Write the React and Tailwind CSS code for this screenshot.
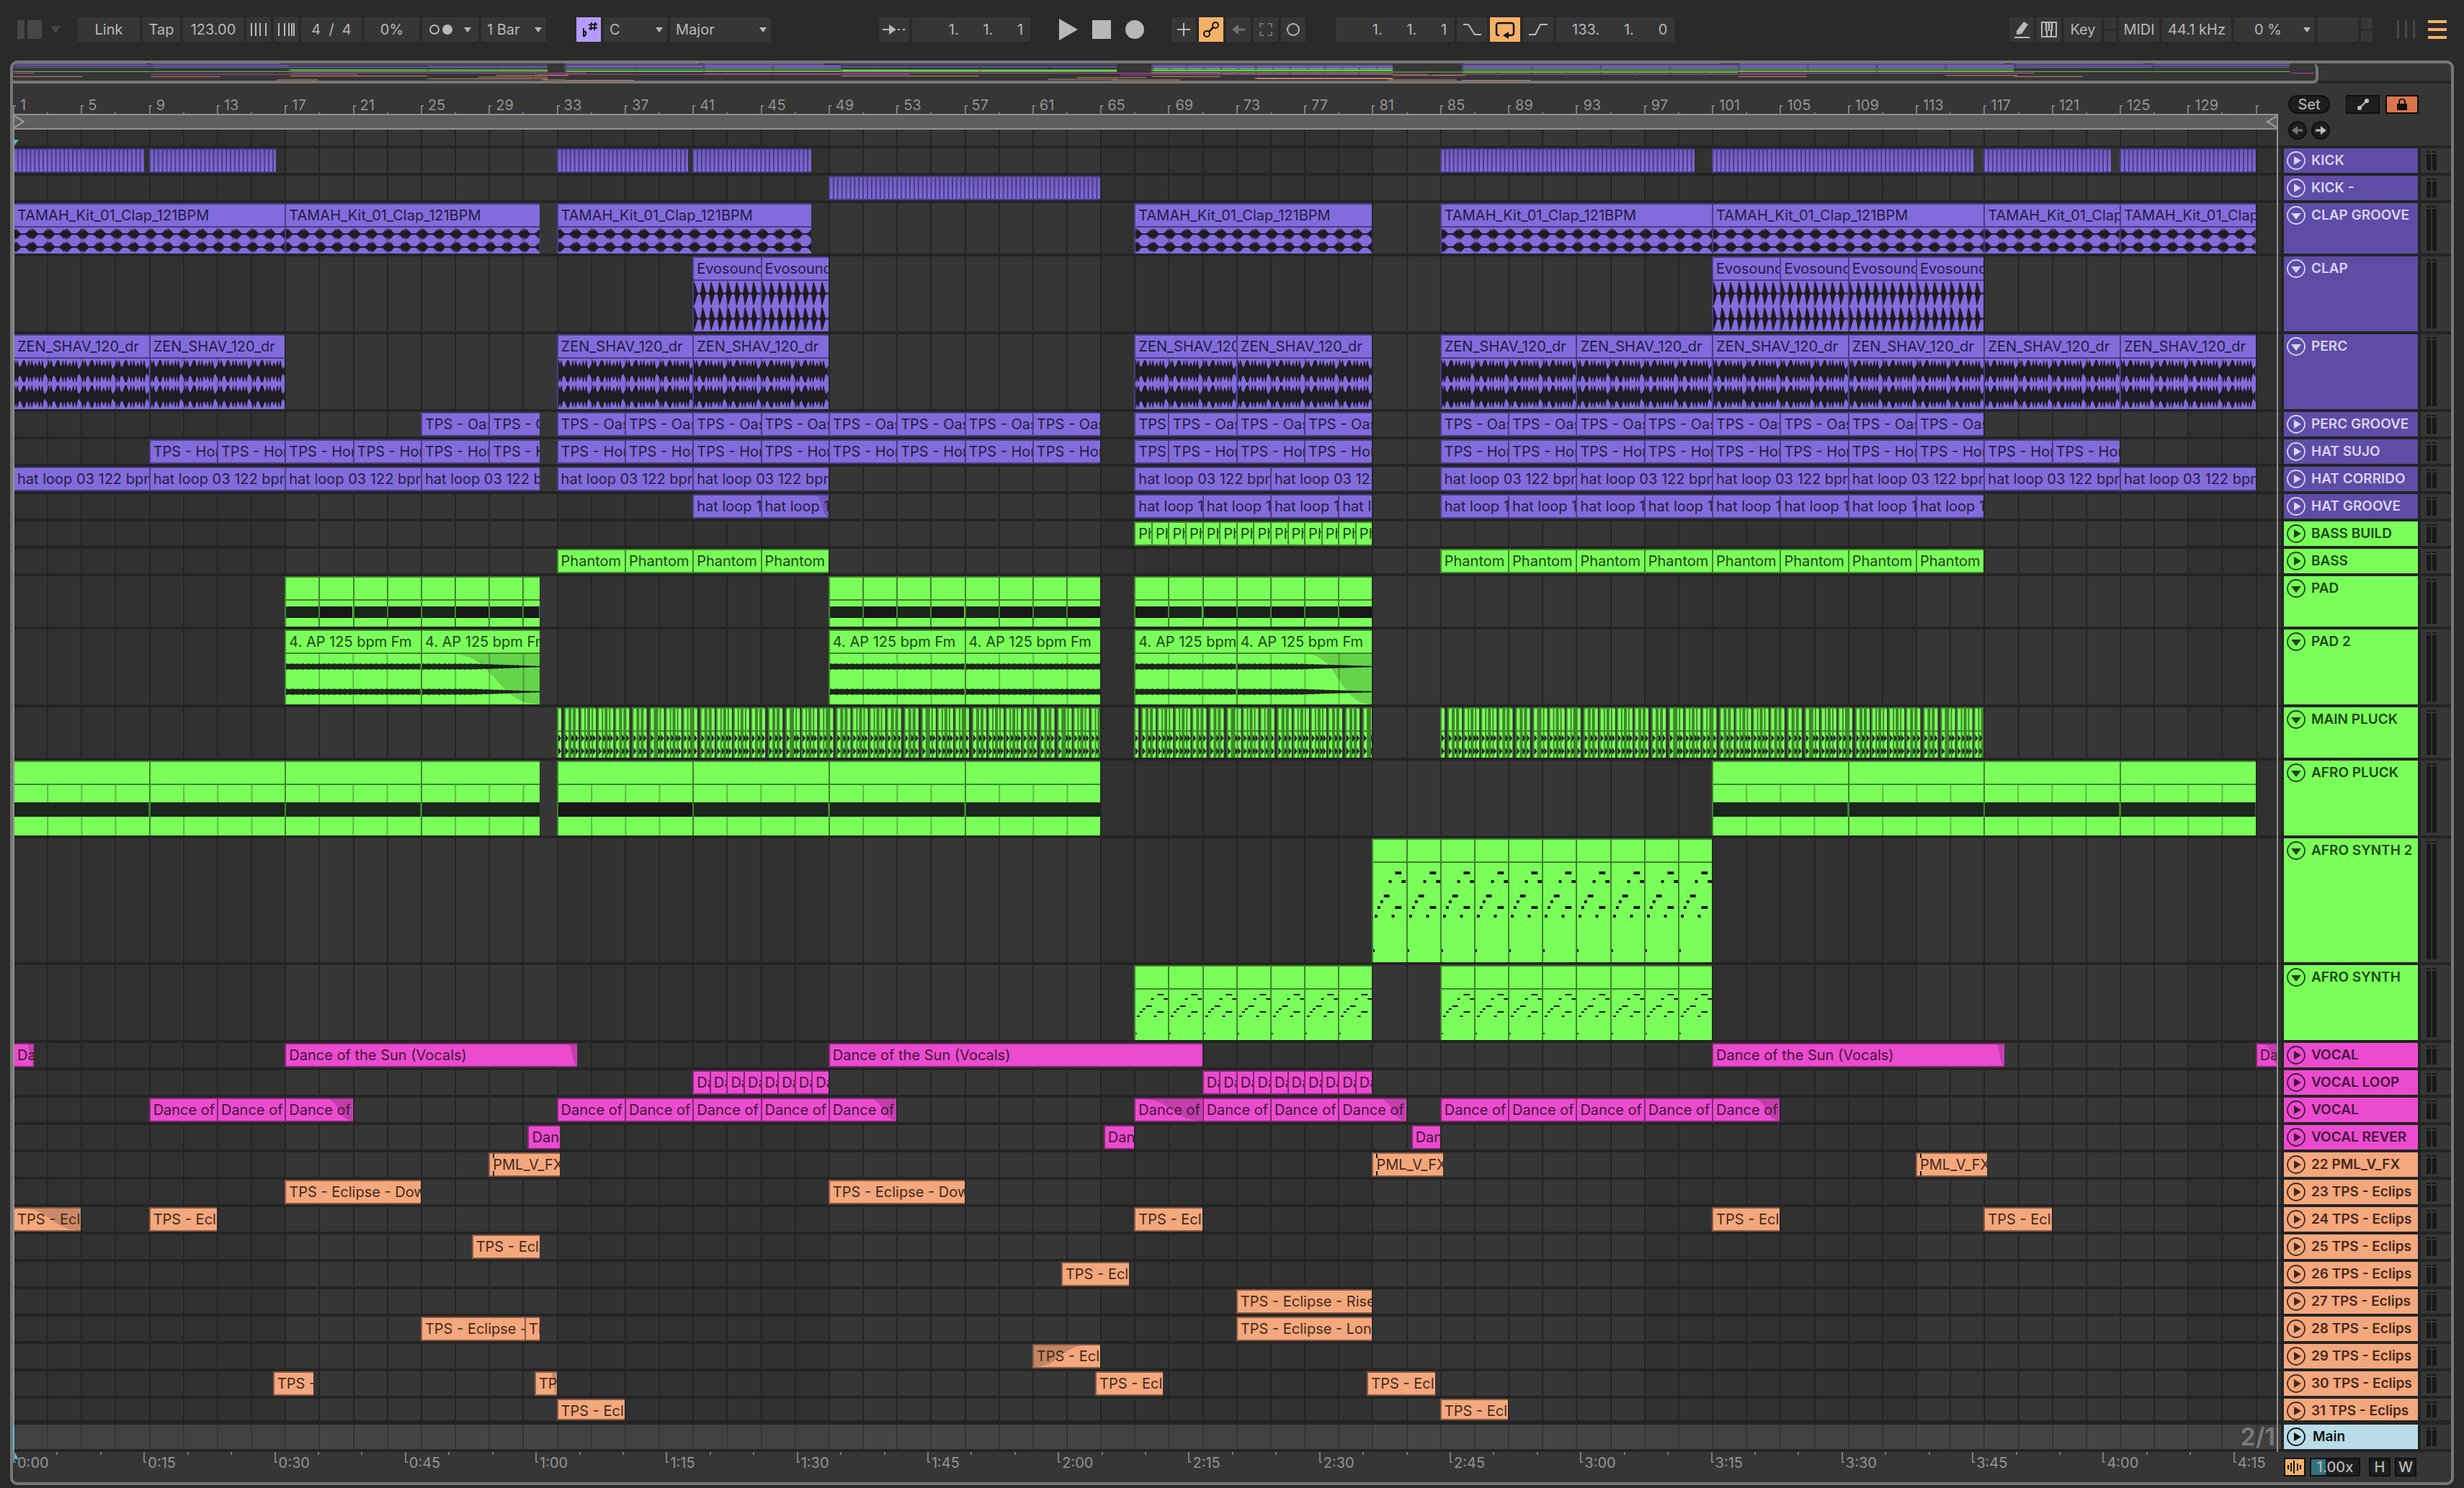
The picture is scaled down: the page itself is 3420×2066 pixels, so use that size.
import { useState } from "react"

const LAST_BAR = 133.33
const OVERVIEW_BARS = 133.5
const SECONDS_PER_BAR = 240 / 123

const pct = (bar) => `${(bar / LAST_BAR) * 100}%`

// clips of equal length laid end to end
const run = (from, to, step, name = "") => {
  const out = []
  for (let b = from; b < to; b += step) {
    out.push({ from: b, to: Math.min(b + step, to), name })
  }
  return out
}

const one = (from, to, name = "", extra = {}) => ({ from, to, name, ...extra })

const themes = {
  purple: {
    clip: "bg-[#826cdb] border-[#4a3c86] text-[#241b45]",
    line: "bg-[#4a3c86]",
    head: "bg-[#5e4ca6] text-[#d9d3f0]",
    base: "#826cdb",
    dark: "#4a3c86",
    wave: "#201c24",
  },
  green: {
    clip: "bg-[#7aff5a] border-[#3d872b] text-[#1d4714]",
    line: "bg-[#3d872b]",
    head: "bg-[#7aff5a] text-[#1d4714]",
    base: "#7aff5a",
    dark: "#3d872b",
    wave: "#1c261c",
  },
  pink: {
    clip: "bg-[#eb4bcf] border-[#7e2870] text-[#431539]",
    line: "bg-[#7e2870]",
    head: "bg-[#eb4bcf] text-[#431539]",
    base: "#eb4bcf",
    dark: "#7e2870",
    wave: "#431539",
  },
  orange: {
    clip: "bg-[#f3a77d] border-[#875a40] text-[#45291a]",
    line: "bg-[#875a40]",
    head: "bg-[#f3a77d] text-[#45291a]",
    base: "#f3a77d",
    dark: "#875a40",
    wave: "#45291a",
  },
}

const CLAP = "TAMAH_Kit_01_Clap_121BPM"
const ZEN = "ZEN_SHAV_120_dr"
const OASIS = "TPS - Oas"
const HOME = "TPS - Hom"
const HAT = "hat loop 03 122 bpm"
const HAT2 = "hat loop 1"
const AP = "4. AP 125 bpm Fm"
const SUN = "Dance of the Sun (Vocals)"
const SUN_SHORT = "Dance of"
const ECL = "TPS - Ecli"

const S = "h-[34px]"
const M = "h-[70px]"
const L = "h-[104px]"
const XL = "h-[172px]"

const initialTracks = [
  { name: "KICK", theme: "purple", size: S, kind: "beats", clips: [one(1, 8.7), one(9, 16.5), one(33, 40.75), one(41, 48), one(85, 100), one(101, 116.4), one(117, 124.5), one(125, 133)] },
  { name: "KICK -", theme: "purple", size: S, kind: "beats", clips: [one(49, 65)] },
  { name: "CLAP GROOVE", theme: "purple", size: M, kind: "groove", clips: [one(1, 17, CLAP), one(17, 32, CLAP), one(33, 48, CLAP), one(67, 81, CLAP), one(85, 101, CLAP), one(101, 117, CLAP), one(117, 125, CLAP), one(125, 133, CLAP)] },
  { name: "CLAP", theme: "purple", size: L, kind: "clap", clips: [...run(41, 49, 4, "Evosound"), ...run(101, 117, 4, "Evosound")] },
  { name: "PERC", theme: "purple", size: L, kind: "perc", clips: [...run(1, 17, 8, ZEN), ...run(33, 49, 8, ZEN), one(67, 73, ZEN), one(73, 81, ZEN), ...run(85, 133, 8, ZEN)] },
  { name: "PERC GROOVE", theme: "purple", size: S, clips: [...run(25, 32, 4, OASIS), ...run(33, 65, 4, OASIS), one(67, 69, OASIS), ...run(69, 81, 4, OASIS), ...run(85, 117, 4, OASIS)] },
  { name: "HAT SUJO", theme: "purple", size: S, clips: [...run(9, 32, 4, HOME), ...run(33, 65, 4, HOME), one(67, 69, HOME), ...run(69, 81, 4, HOME), ...run(85, 125, 4, HOME)] },
  { name: "HAT CORRIDO", theme: "purple", size: S, clips: [...run(1, 32, 8, HAT), ...run(33, 49, 8, HAT), ...run(67, 81, 8, HAT), ...run(85, 133, 8, HAT)] },
  { name: "HAT GROOVE", theme: "purple", size: S, clips: [one(41, 45, HAT2), one(45, 49, HAT2, { fade: 0.8 }), ...run(67, 81, 4, HAT2), ...run(85, 117, 4, HAT2)] },
  { name: "BASS BUILD", theme: "green", size: S, clips: run(67, 81, 1, "Ph") },
  { name: "BASS", theme: "green", size: S, clips: [...run(33, 49, 4, "Phantom"), ...run(85, 117, 4, "Phantom")] },
  { name: "PAD", theme: "green", size: M, kind: "chord", clips: [...run(17, 32, 2), ...run(49, 65, 2), ...run(67, 81, 2)] },
  { name: "PAD 2", theme: "green", size: L, kind: "pad", clips: [one(17, 25, AP), one(25, 32, AP, { fade: 0.25 }), one(49, 57, AP), one(57, 65, AP), one(67, 73, AP), one(73, 81, AP, { fade: 0.5 })] },
  { name: "MAIN PLUCK", theme: "green", size: M, kind: "pluck", clips: [one(33, 65), one(67, 81), one(85, 117)] },
  { name: "AFRO PLUCK", theme: "green", size: L, kind: "drone", clips: [...run(1, 32, 8), ...run(33, 65, 8), ...run(101, 133, 8)] },
  { name: "AFRO SYNTH 2", theme: "green", size: XL, kind: "notesTall", clips: run(81, 101, 2) },
  { name: "AFRO SYNTH", theme: "green", size: L, kind: "notes", clips: [...run(67, 81, 2), ...run(85, 101, 2)] },
  { name: "VOCAL", theme: "pink", size: S, clips: [one(1, 2.25, "Da", { fade: 0.6 }), one(17, 34.2, SUN, { fade: 0.97 }), one(49, 71, SUN), one(101, 118.2, SUN, { fade: 0.97 }), one(133, 134.4, "Da", { fade: 0.3 })] },
  { name: "VOCAL LOOP", theme: "pink", size: S, clips: [...run(41, 49, 1, "Da"), ...run(71, 81, 1, "Da")] },
  { name: "VOCAL", theme: "pink", size: S, clips: [...run(9, 17, 4, SUN_SHORT), one(17, 21, SUN_SHORT, { fade: 0.6 }), ...run(33, 49, 4, SUN_SHORT), one(49, 53, SUN_SHORT, { fade: 0.6 }), one(67, 71, SUN_SHORT, { fade: 0.1 }), ...run(71, 79, 4, SUN_SHORT), one(79, 83, SUN_SHORT, { fade: 0.6 }), ...run(85, 101, 4, SUN_SHORT), one(101, 105, SUN_SHORT, { fade: 0.6 })] },
  { name: "VOCAL REVER", theme: "pink", size: S, clips: [one(31.3, 33.2, "Danc"), one(65.2, 67, "Dan"), one(83.3, 85, "Dan")] },
  { name: "22 PML_V_FX", theme: "orange", size: S, clips: [one(29, 33.2, "PML_V_FX", { marker: true }), one(81, 85.2, "PML_V_FX", { marker: true }), one(113, 117.2, "PML_V_FX", { marker: true })] },
  { name: "23 TPS - Eclips", theme: "orange", size: S, clips: [one(17, 25, "TPS - Eclipse - Dow"), one(49, 57, "TPS - Eclipse - Dow")] },
  { name: "24 TPS - Eclips", theme: "orange", size: S, clips: [one(1, 5, ECL, { fade: 0.1 }), one(9, 13, ECL), one(67, 71, ECL), one(101, 105, ECL), one(117, 121, ECL)] },
  { name: "25 TPS - Eclips", theme: "orange", size: S, clips: [one(28, 32, ECL)] },
  { name: "26 TPS - Eclips", theme: "orange", size: S, clips: [one(62.7, 66.7, ECL)] },
  { name: "27 TPS - Eclips", theme: "orange", size: S, clips: [one(73, 81, "TPS - Eclipse - Rise")] },
  { name: "28 TPS - Eclips", theme: "orange", size: S, clips: [one(25, 31.1, "TPS - Eclipse -"), one(31.1, 32, "TP"), one(73, 81, "TPS - Eclipse - Long")] },
  { name: "29 TPS - Eclips", theme: "orange", size: S, clips: [one(61, 65, ECL, { fadeIn: 0.8 })] },
  { name: "30 TPS - Eclips", theme: "orange", size: S, clips: [one(16.3, 18.7, "TPS -"), one(31.7, 33, "TP", { fade: 0.7 }), one(64.7, 68.7, ECL), one(80.7, 84.7, ECL)] },
  { name: "31 TPS - Eclips", theme: "orange", size: "h-[30px]", clips: [one(33, 37, ECL), one(85, 89, ECL)] },
]

const bodyHeight = { [S]: 30, [M]: 36, [L]: 70, [XL]: 138 }

const grooveTable = [
  0.45, 0.8, 0.5, 0.95, 0.55, 0.9, 0.5, 0.7, 0.4, 0.35, 0.2, 0.14,
  0.12, 0.12, 0.12, 0.12, 0.12, 0.12, 0.14, 0.3, 0.2, 0.55, 0.4, 0.85,
]
const clapTable = [0.2, 0.6, 0.93, 0.88, 0.72, 0.55, 0.34, 0.15, 0.06, 0.06, 0.06, 0.06]
const percTable = [
  0.5, 0.6, 0.9, 0.95, 0.55, 0.85, 0.95, 0.8, 0.5, 0.45, 0.35, 0.45,
  0.6, 0.75, 0.9, 0.95, 0.95, 0.9, 0.7, 0.5, 0.42, 0.6, 0.85, 0.95,
  0.55, 0.5, 0.9, 0.95, 0.65, 0.5, 0.4, 0.6, 0.8, 0.7, 0.5, 0.42,
  0.7, 0.95, 0.8, 0.45, 0.6, 0.95, 0.85, 0.5, 0.3, 0.18, 0.3, 0.4,
]

// amplitude (0..1) of each wave form, x is in 24ths of a bar
const envelopes = {
  groove: (x) => grooveTable[x % 24],
  clap: (x) => clapTable[x % 12],
  perc: (x) => percTable[x % 48] * 0.93,
  pad: (x) => 0.2 + 0.06 * Math.abs(Math.sin(x * 12.9898) * Math.cos(x * 4.1)),
}

const wavePath = (kind, width, center, half, fade) => {
  const amp = (x) => {
    let a = envelopes[kind](x)
    if (kind === "pad" && fade) {
      const t = Math.max(0, (x / width - 0.45) / 0.55)
      a = a * (1 - t) + 0.04 * t
    }
    return a * half
  }
  let top = ""
  let bottom = ""
  for (let x = 0; x <= width; x += 1) {
    top += `L${x} ${(center - amp(x)).toFixed(1)}`
    bottom = `L${x} ${(center + amp(x)).toFixed(1)}` + bottom
  }
  return `M0 ${center}${top}${bottom}Z`
}

const noteShapes = [
  [31, 14, 9], [22, 26, 4], [40, 26, 6], [15, 46, 8], [10, 54, 4],
  [6, 62, 4], [31, 62, 9], [2, 74, 4], [26, 74, 4], [0, 122, 2],
]

const pluckStripes = [
  [2, 4], [12, 4], [20, 2], [26, 4], [34, 4], [40, 2], [46, 2], [50, 4], [58, 4],
  [64, 2], [70, 2], [74, 4], [82, 4], [90, 2], [96, 4], [106, 4], [114, 2], [120, 4],
  [130, 4], [140, 2], [144, 4], [152, 4], [158, 2], [164, 2], [168, 4], [176, 4], [182, 2],
]
const pluckGaps = [[6, 4], [30, 2], [54, 2], [78, 2], [100, 4], [124, 4], [148, 2], [172, 2]]

function BodyLines({ clip, height, color }) {
  const bars = []
  const first = Math.floor((clip.from + 1) / 2) * 2 + 1
  for (let b = first; b < clip.to; b += 2) bars.push(b)
  return bars.map((b) => (
    <rect key={b} x={(b - clip.from) * 24} y="0" width="2" height={height} fill={color} opacity="0.55" />
  ))
}

function ClipBody({ track, clip }) {
  const theme = themes[track.theme]
  const h = bodyHeight[track.size]
  const w = (clip.to - clip.from) * 24
  const kind = track.kind

  return (
    <svg className="block min-h-0 w-full flex-1" viewBox={`2 0 ${w - 2} ${h}`} preserveAspectRatio="none" aria-hidden="true">
      {envelopes[kind] && (
        <>
          <BodyLines clip={clip} height={h} color={theme.dark} />
          <path d={wavePath(kind, w, h / 4, h / 4, clip.fade)} fill={theme.wave} />
          <path d={wavePath(kind, w, (h * 3) / 4, h / 4, clip.fade)} fill={theme.wave} />
        </>
      )}
      {kind === "chord" && (
        <rect x="0" y="8" width={w} height="16" fill={clip.from % 4 === 3 ? "#181818" : theme.wave} />
      )}
      {kind === "drone" && (
        <>
          <BodyLines clip={clip} height={h} color={theme.dark} />
          <rect x="0" y="24" width={w} height="20" fill={clip.from === 33 ? "#181818" : theme.wave} />
        </>
      )}
      {kind === "notesTall" &&
        noteShapes.map(([x, y, len], i) => (
          <rect key={i} x={x + 2} y={y - 2} width={len} height="4" fill="#181818" />
        ))}
      {kind === "notes" &&
        noteShapes.map(([x, y, len], i) => (
          <rect key={i} x={x + 2} y={y / 2 - 1} width={len} height="2" fill="#181818" />
        ))}
    </svg>
  )
}

function Fade({ clip }) {
  if (clip.fade) {
    const f = clip.fade * 100
    const m = (f + 100) / 2
    return (
      <svg className="absolute inset-0 h-full w-full" viewBox="0 0 100 100" preserveAspectRatio="none" aria-hidden="true">
        <path d={`M${f} 0C${m} 0 ${m} 100 100 100V0Z`} fill="#000" opacity="0.17" />
      </svg>
    )
  }
  if (clip.fadeIn) {
    const f = clip.fadeIn * 100
    return (
      <svg className="absolute inset-0 h-full w-full" viewBox="0 0 100 100" preserveAspectRatio="none" aria-hidden="true">
        <path d={`M0 100C${f / 2} 100 ${f / 2} 0 ${f} 0H0Z`} fill="#000" opacity="0.2" />
      </svg>
    )
  }
  return null
}

function BeatClip({ clip }) {
  const beats = Math.round((clip.to - clip.from) * 4)
  const id = `beat-${Math.round(clip.from)}`
  return (
    <div
      className="absolute inset-y-0 overflow-hidden border-y-2 border-[#4a3c86] bg-[#4a3c86]"
      style={{ left: pct(clip.from - 1), width: pct(clip.to - clip.from) }}
    >
      <svg className="block h-full w-full" viewBox={`0 0 ${beats * 6} 30`} preserveAspectRatio="none" aria-hidden="true">
        <defs>
          <linearGradient id={id} x1="0" y1="0" x2="0" y2="1">
            <stop offset="0" stopColor="#6f5cb9" />
            <stop offset="1" stopColor="#826cdb" />
          </linearGradient>
        </defs>
        {Array.from({ length: beats }, (_, i) => (
          <rect key={i} x={i * 6 + 2} y="0" width="4" height="30" fill={`url(#${id})`} />
        ))}
      </svg>
    </div>
  )
}

function PluckClip({ clip }) {
  const w = (clip.to - clip.from) * 23.5
  const tiles = []
  for (let t = 0; t < w; t += 188) tiles.push(t)
  return (
    <div
      className="absolute inset-y-0 overflow-hidden bg-[#3d872b]"
      style={{ left: pct(clip.from - 1), width: pct(clip.to - clip.from) }}
    >
      <svg className="block h-full w-full" viewBox={`0 0 ${w} 70`} preserveAspectRatio="none" aria-hidden="true">
        {tiles.map((t) => (
          <g key={t} transform={`translate(${t} 0)`}>
            {pluckGaps.map(([x, len]) => (
              <rect key={x} x={x} y="0" width={len} height="70" fill="#343434" />
            ))}
            {pluckStripes.map(([x, len]) => (
              <g key={x}>
                <rect x={x} y="2" width={len} height="30" fill="#7aff5a" />
                <rect x={x} y="34" width={len} height="36" fill="#7aff5a" />
                <path d={`M${x} 38L${x + 4} 43L${x} 48Z M${x} 56L${x + 4} 61L${x} 66Z`} fill="#1c261c" />
              </g>
            ))}
          </g>
        ))}
      </svg>
    </div>
  )
}

function Clip({ track, clip }) {
  const theme = themes[track.theme]
  const place = { left: pct(clip.from - 1), width: pct(clip.to - clip.from) }

  if (!track.kind) {
    return (
      <div className={`absolute inset-y-0 overflow-hidden border-y-2 border-l-2 ${theme.clip}`} style={place}>
        <Fade clip={clip} />
        {clip.marker && (
          <>
            <i className="absolute top-0 left-1 h-[6px] w-[2px] bg-[#181818]" />
            <i className="absolute bottom-0 left-1 h-[6px] w-[2px] bg-[#181818]" />
          </>
        )}
        <span className="relative block overflow-hidden pl-1 text-[20px] leading-[30px] whitespace-nowrap">{clip.name}</span>
      </div>
    )
  }

  return (
    <div className={`absolute inset-y-0 flex flex-col overflow-hidden border-t-2 border-l-2 ${theme.clip}`} style={place}>
      <span className="block h-[30px] shrink-0 overflow-hidden pl-1 text-[20px] leading-[30px] whitespace-nowrap">{clip.name}</span>
      <i className={`h-[2px] shrink-0 ${theme.line}`} />
      <div className="relative flex min-h-0 flex-1">
        <Fade clip={clip} />
        <ClipBody track={track} clip={clip} />
      </div>
    </div>
  )
}

function Lane({ track }) {
  return (
    <div className={`relative overflow-hidden ${track.size}`}>
      {track.clips.map((clip) => {
        if (track.kind === "beats") return <BeatClip key={clip.from} clip={clip} />
        if (track.kind === "pluck") return <PluckClip key={clip.from} clip={clip} />
        return <Clip key={clip.from} track={track} clip={clip} />
      })}
    </div>
  )
}

function Grid() {
  const lines = Array.from({ length: 66 }, (_, i) => 3 + i * 2)
  const bands = [17, 49, 81, 113]
  return (
    <div className="absolute inset-0 overflow-hidden bg-[#313131]">
      {bands.map((b) => (
        <i key={b} className="absolute inset-y-0 bg-[#363636]" style={{ left: pct(b - 1), width: pct(16) }} />
      ))}
      {lines.map((b) => (
        <i key={b} className="absolute inset-y-0 w-[2px] bg-[#252525]" style={{ left: pct(b - 1) }} />
      ))}
    </div>
  )
}

function BarRuler() {
  const labels = Array.from({ length: 34 }, (_, i) => 1 + i * 4)
  return (
    <div className="relative h-[42px] overflow-hidden text-[20px] leading-[24px] text-[#949494]">
      {labels.map((b) => (
        <div key={b} className="absolute bottom-0 h-[24px]" style={{ left: pct(b - 1) }}>
          <i className="absolute bottom-0 left-0 h-[12px] w-[4px] border-t-2 border-l-2 border-[#7d7d7d]" />
          {b < 133 && <span className="block pl-[10px]">{b}</span>}
        </div>
      ))}
      {labels.slice(0, 33).map((b) => (
        <i key={b} className="absolute bottom-0 h-[2px] w-[2px] bg-[#7d7d7d]" style={{ left: pct(b + 1) }} />
      ))}
    </div>
  )
}

function TimeRuler() {
  const seconds = Array.from({ length: 52 }, (_, i) => i * 5)
  return (
    <div className="relative h-[42px] overflow-hidden text-[20px] leading-[30px] text-[#949494]">
      {seconds.map((s) => {
        const left = pct(s / SECONDS_PER_BAR)
        if (s % 15) {
          return <i key={s} className="absolute top-0 h-[4px] w-[2px] bg-[#7d7d7d]" style={{ left }} />
        }
        const label = `${Math.floor(s / 60)}:${String(s % 60).padStart(2, "0")}`
        return (
          <div key={s} className="absolute top-0" style={{ left }}>
            <i className="absolute top-0 left-0 h-[15px] w-[4px] border-b-2 border-l-2 border-[#7d7d7d]" />
            <span className="block pl-[6px]">{label}</span>
          </div>
        )
      })}
      <svg className="absolute top-0 left-[2px] h-[10px] w-[6px]" viewBox="0 0 6 10" aria-hidden="true">
        <path d="M0 0L6 10H0Z" fill="#4fb9cf" />
      </svg>
    </div>
  )
}

function Overview({ tracks }) {
  return (
    <div className="flex h-[28px]">
      <div className="min-w-0 flex-1 rounded-r-[8px] border-r-4 border-b-4 border-[#777777]">
        <svg className="block h-full w-full" viewBox={`0 0 ${OVERVIEW_BARS} 31`} preserveAspectRatio="none" aria-hidden="true">
          {tracks.map((t, row) =>
            t.clips.map((c) => (
              <g key={`${row}-${c.from}`}>
                <rect x={c.from - 1} y={row} width={c.to - c.from} height="1.2" fill={themes[t.theme].base} opacity={t.kind === "beats" ? 0.7 : 0.8} />
                <rect x={c.from - 1} y={row} width="0.12" height="1.2" fill={themes[t.theme].dark} />
              </g>
            ))
          )}
        </svg>
      </div>
      <div className="w-[184px] border-b-4 border-[#242424]" />
    </div>
  )
}

function FoldIcon({ open }) {
  return (
    <svg className="h-[26px] w-[26px] shrink-0" viewBox="0 0 26 26" aria-hidden="true">
      <circle cx="13" cy="13" r="12" fill="none" stroke="currentColor" strokeWidth="1.8" />
      {open ? <path d="M6 10H20L13 19Z" fill="currentColor" /> : <path d="M10 7V19L20 13Z" fill="currentColor" />}
    </svg>
  )
}

function Meter() {
  return (
    <div className="ml-1 flex flex-1 gap-[2px] bg-[#363636] py-1 pl-2">
      {[0, 1].map((i) => (
        <div key={i} className="flex w-[6px] flex-col gap-[2px]">
          <i className="h-[2px] bg-[#181818]" />
          <i className="flex-1 bg-[#181818]" />
        </div>
      ))}
    </div>
  )
}

function TrackHeader({ track, open, onToggle }) {
  return (
    <div className={`flex ${track.size}`}>
      <i className="mr-1 w-1 bg-[#323232]" />
      <div className={`w-[186px] overflow-hidden ${themes[track.theme].head}`}>
        <button type="button" aria-expanded={open} onClick={onToggle} className="flex h-[34px] w-full items-center gap-[8px] pl-1 text-left text-[19px] leading-[34px] font-semibold whitespace-nowrap">
          <FoldIcon open={open} />
          {track.name}
        </button>
      </div>
      <Meter />
    </div>
  )
}

const box = "flex h-[34px] shrink-0 items-center justify-center bg-[#363636] text-[20px] text-[#b8b8b8]"
const field = "h-[34px] shrink-0 bg-[#363636] text-[20px] text-[#b8b8b8] outline-none"
const hot = "flex h-[34px] shrink-0 items-center justify-center bg-[#f5b166] text-[#141414]"

function Picker({ label, value, options, width, indent }) {
  return (
    <label className={`relative flex h-[34px] shrink-0 items-center bg-[#363636] text-[#b8b8b8] ${width}`}>
      <select aria-label={label} defaultValue={value} className={`h-full w-full appearance-none bg-transparent text-[20px] outline-none ${indent}`}>
        {options.map((o) => (
          <option key={o}>{o}</option>
        ))}
      </select>
      <svg className="pointer-events-none absolute right-[6px] h-[7px] w-[10px]" viewBox="0 0 10 7" aria-hidden="true">
        <path d="M0 0H10L5 7Z" fill="currentColor" />
      </svg>
    </label>
  )
}

function Icon({ width = 28, children }) {
  return (
    <svg width={width} height="28" viewBox={`0 0 ${width} 28`} fill="none" stroke="currentColor" strokeWidth="2" aria-hidden="true">
      {children}
    </svg>
  )
}

function TransportBar() {
  const [automation, setAutomation] = useState(true)
  const [loop, setLoop] = useState(true)

  return (
    <header className="flex h-[84px] items-start px-6 pt-6">
      {/* Tempo and metronome */}
      <div className="flex items-center gap-1">
        <button type="button" aria-label="Browser" className="mr-[10px] flex h-[26px] items-center gap-1 text-[#474747]">
          <i className="h-full w-[10px] bg-current" />
          <i className="h-full w-[20px] bg-current" />
          <svg className="ml-2 h-[10px] w-[14px]" viewBox="0 0 14 10" aria-hidden="true">
            <path d="M0 0H14L7 10Z" fill="currentColor" />
          </svg>
        </button>
        <button type="button" className={`${box} ml-[10px] w-[86px]`}>Link</button>
        <button type="button" className={`${box} w-[52px]`}>Tap</button>
        <input aria-label="Tempo" defaultValue="123.00" className={`${field} w-[84px] text-center`} />
        <button type="button" aria-label="Nudge down" className={`${box} w-[34px]`}>
          <Icon><path d="M4 5V23M10 5V23M16 5V23M24 5V23" /></Icon>
        </button>
        <button type="button" aria-label="Nudge up" className={`${box} w-[34px]`}>
          <Icon><path d="M4 5V23M12 5V23M18 5V23M22 5V23M25 5V23" /></Icon>
        </button>
        <input aria-label="Time signature" defaultValue="4  /  4" className={`${field} w-[84px] text-center whitespace-pre`} />
        <input aria-label="Groove amount" defaultValue="0%" className={`${field} w-[76px] text-center`} />
        <button type="button" aria-label="Metronome" className={`${box} w-[78px] gap-[16px]`}>
          <Icon width={32}>
            <circle cx="7" cy="14" r="6" />
            <circle cx="25" cy="14" r="7" fill="currentColor" stroke="none" />
          </Icon>
          <svg className="h-[7px] w-[10px]" viewBox="0 0 10 7" aria-hidden="true">
            <path d="M0 0H10L5 7Z" fill="currentColor" />
          </svg>
        </button>
        <Picker label="Quantization" value="1 Bar" options={["None", "1 Bar", "2 Bars", "4 Bars"]} width="w-[90px]" indent="pl-2" />
        <button type="button" aria-label="Scale mode" className="ml-[38px] flex h-[34px] w-[34px] items-center justify-center bg-[#b49bff] text-[#141414]">
          <Icon>
            <path d="M7 12V24M7 18C10 15 13 19 7 24M18 4L17 15M23 4L22 15M14 7.500L26 6.500M14 12.500L26 11.500" />
          </Icon>
        </button>
        <Picker label="Root note" value="C" options={["C", "D", "E", "F", "G", "A", "B"]} width="w-[88px]" indent="pl-2" />
        <Picker label="Scale" value="Major" options={["Major", "Minor", "Dorian"]} width="w-[140px]" indent="pl-2" />
      </div>

      <div className="grow-[150]" />

      {/* Transport */}
      <div className="flex items-center gap-1">
        <button type="button" aria-label="Follow" className={`${box} w-[42px]`}>
          <Icon width={34}>
            <path d="M1 14H12M22 14H25M29 14H32" />
            <path d="M10 7L20 14L10 21Z" fill="currentColor" stroke="none" />
          </Icon>
        </button>
        <input aria-label="Arrangement position" defaultValue="1.      1.      1" className={`${field} w-[164px] pr-[10px] text-right`} />
        <button type="button" aria-label="Play" className="ml-8 flex h-[34px] w-[34px] items-center justify-center text-[#b8b8b8]">
          <svg width="26" height="30" viewBox="0 0 26 30" aria-hidden="true"><path d="M0 0L26 15L0 30Z" fill="currentColor" /></svg>
        </button>
        <button type="button" aria-label="Stop" className="ml-[8px] flex h-[34px] w-[34px] items-center justify-center text-[#b8b8b8]">
          <i className="h-[26px] w-[26px] bg-current" />
        </button>
        <button type="button" aria-label="Record" className="ml-[8px] mr-[30px] flex h-[34px] w-[34px] items-center justify-center text-[#b8b8b8]">
          <i className="h-[26px] w-[26px] rounded-full bg-current" />
        </button>
        <button type="button" aria-label="Overdub" className={`${box} w-[34px]`}>
          <Icon><path d="M5 14H23M14 5V23" /></Icon>
        </button>
        <button type="button" aria-label="Automation arm" aria-pressed={automation} onClick={() => setAutomation(!automation)} className={`${hot} w-[34px]`}>
          <Icon>
            <circle cx="8" cy="20" r="4" />
            <circle cx="20" cy="8" r="4" />
            <path d="M11 17L17 11" strokeWidth="2.500" />
          </Icon>
        </button>
        <button type="button" aria-label="Re-enable automation" className={`${box} w-[34px]`}>
          <Icon>
            <path d="M12 14H23" stroke="#707070" strokeWidth="3" />
            <path d="M14 7V21L5 14Z" fill="#707070" stroke="none" />
          </Icon>
        </button>
        <button type="button" aria-label="Capture" className={`${box} w-[34px]`}>
          <Icon><path d="M11 6H6V11M17 6H22V11M11 22H6V17M17 22H22V17" stroke="#707070" /></Icon>
        </button>
        <button type="button" aria-label="Session record" className={`${box} w-[34px]`}>
          <Icon><circle cx="14" cy="14" r="8" /></Icon>
        </button>
        <input aria-label="Loop start" defaultValue="1.      1.      1" className={`${field} ml-[38px] w-[164px] pr-[10px] text-right`} />
        <button type="button" aria-label="Punch in" className={`${box} w-[42px]`}>
          <Icon width={34}><path d="M5 7H12L21 21H30" /></Icon>
        </button>
        <button type="button" aria-label="Loop" aria-pressed={loop} onClick={() => setLoop(!loop)} className={`${hot} w-[42px]`}>
          <Icon width={34}>
            <path d="M9 22H7.500A3 3 0 0 1 5 19V8A3 3 0 0 1 8 5H26A3 3 0 0 1 29 8V19A3 3 0 0 1 26 22H19" strokeWidth="2.500" />
            <path d="M22 17V27L14 22Z" fill="currentColor" stroke="none" />
          </Icon>
        </button>
        <button type="button" aria-label="Punch out" className={`${box} w-[42px]`}>
          <Icon width={34}><path d="M4 21H13L20 7H30" /></Icon>
        </button>
        <input aria-label="Loop length" defaultValue="133.      1.      0" className={`${field} w-[164px] pr-[10px] text-right`} />
      </div>

      <div className="grow-[464]" />

      {/* Status */}
      <div className="flex items-center gap-1">
        <button type="button" aria-label="Draw mode" className={`${box} w-[34px]`}>
          <Icon>
            <path d="M4 25H25" />
            <path d="M7 16L17 3L23 7L14 20L7 21Z" fill="currentColor" stroke="none" />
          </Icon>
        </button>
        <button type="button" aria-label="Computer MIDI keyboard" className={`${box} w-[34px]`}>
          <Icon>
            <path d="M4 4H24V24H4Z" />
            <path d="M11 15V24M17 15V24" />
            <path d="M10 4V16M18 4V16M14 4V16" strokeWidth="2.500" />
          </Icon>
        </button>
        <button type="button" className={`${box} w-[52px]`}>Key</button>
        <div className="flex w-4 flex-col gap-[2px]">
          <i className="h-4 bg-[#363636]" />
          <i className="h-4 bg-[#363636]" />
        </div>
        <button type="button" className={`${box} w-[56px]`}>MIDI</button>
        <button type="button" className={`${box} w-[96px]`}>44.1 kHz</button>
        <Picker label="CPU load" value="0 %" options={["0 %", "Average"]} width="w-[112px]" indent="pl-[28px]" />
        <div className={`${box} w-[56px]`} />
        <div className="flex w-4 flex-col gap-[2px]">
          <i className="h-4 bg-[#363636]" />
          <i className="h-4 bg-[#363636]" />
        </div>
        <button type="button" aria-label="Session view" className="ml-[30px] flex h-[26px] gap-[8px] text-[#474747]">
          <i className="w-[3px] bg-current" />
          <i className="w-[3px] bg-current" />
          <i className="w-[3px] bg-current" />
        </button>
        <button type="button" aria-label="Arrangement view" className="ml-[14px] flex h-[26px] w-[26px] flex-col justify-between text-[#f5b166]">
          <i className="h-1 w-full bg-current" />
          <i className="h-1 w-full bg-current" />
          <i className="h-1 w-full bg-current" />
        </button>
      </div>
    </header>
  )
}

const pill = "flex h-[26px] items-center justify-center rounded-full border-2 border-[#101010] bg-[#1e1e1e] text-[#c0c0c0]"
const chip = "flex h-[26px] items-center justify-center border-2 border-[#101010] bg-[#1e1e1e] text-[20px] leading-[22px] font-medium text-[#b8b8b8]"

function SetControls() {
  return (
    <div className="flex h-[86px] flex-col gap-[10px] pt-4 pl-[14px]">
      <div className="flex">
        <button type="button" className={`${pill} w-[58px] text-[20px] leading-[22px]`}>Set</button>
        <button type="button" aria-label="Show automation" className="ml-[22px] flex h-[26px] w-[47px] items-center justify-center border-2 border-[#101010] bg-[#1e1e1e] text-[#c0c0c0]">
          <svg width="16" height="16" viewBox="0 0 16 16" aria-hidden="true">
            <circle cx="3" cy="13" r="3" fill="currentColor" />
            <circle cx="13" cy="3" r="3" fill="currentColor" />
            <path d="M3 13L13 3" stroke="currentColor" strokeWidth="2" />
          </svg>
        </button>
        <button type="button" aria-label="Lock envelopes" className="ml-2 flex h-[26px] w-[46px] items-center justify-center border-2 border-[#101010] bg-[#dc744c] text-[#101010]">
          <svg width="14" height="16" viewBox="0 0 14 16" aria-hidden="true">
            <path d="M3 8V4.500A4 4 0 0 1 11 4.500V8" fill="none" stroke="currentColor" strokeWidth="2" />
            <rect x="0" y="7" width="14" height="9" fill="currentColor" />
          </svg>
        </button>
      </div>
      <div className="flex gap-[6px]">
        <button type="button" aria-label="Previous locator" className={`${pill} w-[26px]`}>
          <svg width="16" height="12" viewBox="0 0 16 12" aria-hidden="true"><path d="M0 6L8 0V4.500H15V7.500H8V12Z" fill="#777" /></svg>
        </button>
        <button type="button" aria-label="Next locator" className={`${pill} w-[26px]`}>
          <svg width="16" height="12" viewBox="0 0 16 12" aria-hidden="true"><path d="M16 6L8 0V4.500H1V7.500H8V12Z" fill="currentColor" /></svg>
        </button>
      </div>
    </div>
  )
}

export default function App() {
  const [folded, setFolded] = useState({})

  const isOpen = (track, i) => (folded[i] === undefined ? bodyHeight[track.size] > 30 : !folded[i])

  return (
    <div className="min-h-screen bg-[#2a2a2a] pb-1 font-['Inter','Liberation_Sans',sans-serif] text-[20px]">
      <TransportBar />

      <main className="mx-[14px] overflow-hidden rounded-[10px] border-4 border-[#777777] bg-[#363636]">
        <Overview tracks={initialTracks} />

        <div className="flex">
          {/* Timeline */}
          <section className="min-w-0 flex-1" aria-label="Arrangement">
            <BarRuler />
            <div className="flex h-[22px] items-center justify-between border-2 border-[#919191] bg-[#5e5e5e]">
              <svg width="14" height="18" viewBox="0 0 14 18" aria-hidden="true"><path d="M0 1L13 9L0 17" fill="none" stroke="#a5a5a5" strokeWidth="2" /></svg>
              <svg width="14" height="18" viewBox="0 0 14 18" aria-hidden="true"><path d="M14 1L1 9L14 17" fill="none" stroke="#a5a5a5" strokeWidth="2" /></svg>
            </div>

            <div className="relative">
              <Grid />
              <div className="relative h-[22px]">
                <svg className="absolute bottom-0 left-[2px] h-[8px] w-[6px]" viewBox="0 0 6 8" aria-hidden="true">
                  <path d="M0 0H6L0 8Z" fill="#4fb9cf" />
                </svg>
              </div>
              <div className="relative border-t-4 border-[#242424]">
                {initialTracks.map((track, i) => (
                  <div key={i} className="border-b-4 border-[#242424]">
                    <Lane track={track} />
                  </div>
                ))}
              </div>
              <div className="relative border-t-2 border-b-4 border-[#242424]">
                <div className="h-[34px] overflow-hidden bg-white/8 pr-1 text-right text-[34px] leading-[34px] font-semibold text-[#7a7a7a]">
                  2/1
                </div>
              </div>
              <i className="absolute inset-y-0 left-0 w-[2px] bg-[#919191]" />
              <i className="absolute inset-y-0 right-0 w-[2px] bg-[#919191]" />
              <i className="absolute bottom-1 left-0 h-[34px] w-[2px] bg-[#4fb9cf]" />
            </div>
            <TimeRuler />
          </section>

          {/* Track headers */}
          <aside className="w-[240px] shrink-0" aria-label="Tracks">
            <SetControls />
            <div className="border-t-4 border-[#242424] bg-[#242424]">
              {initialTracks.map((track, i) => (
                <div key={i} className="border-b-4 border-[#242424]">
                  <TrackHeader
                    track={track}
                    open={isOpen(track, i)}
                    onToggle={() => setFolded({ ...folded, [i]: isOpen(track, i) })}
                  />
                </div>
              ))}
              <div className="flex h-[40px] border-t-2 border-b-4 border-[#242424]">
                <i className="mr-1 w-1 bg-[#424242]" />
                <button type="button" className="flex w-[186px] items-center gap-[10px] bg-[#b8dce8] pl-1 text-left text-[19px] font-semibold text-[#101010]">
                  <FoldIcon open={false} />
                  Main
                </button>
                <Meter />
              </div>
            </div>
            <div className="flex h-[42px] items-start pt-2 pl-2">
              <button type="button" aria-label="Show waveforms" className="flex h-[26px] w-[30px] items-center justify-center border-2 border-[#101010] bg-[#f5b166] text-[#141414]">
                <svg width="20" height="18" viewBox="0 0 20 18" aria-hidden="true">
                  <path d="M1 6V12M5 3V15M9 0V18M14 4V14M18 6V12" stroke="currentColor" strokeWidth="2" />
                </svg>
              </button>
              <input aria-label="Zoom" defaultValue="1.00x" className="ml-[6px] h-[26px] w-[70px] border-2 border-[#101010] bg-[linear-gradient(90deg,#33727f_0_20px,#1e1e1e_20px)] text-center text-[20px] font-medium text-[#b8b8b8] outline-none" />
              <button type="button" aria-label="Fit height" className={`${chip} ml-3 w-[30px]`}>H</button>
              <button type="button" aria-label="Fit width" className={`${chip} ml-[6px] w-[30px]`}>W</button>
            </div>
          </aside>
        </div>
      </main>
    </div>
  )
}
